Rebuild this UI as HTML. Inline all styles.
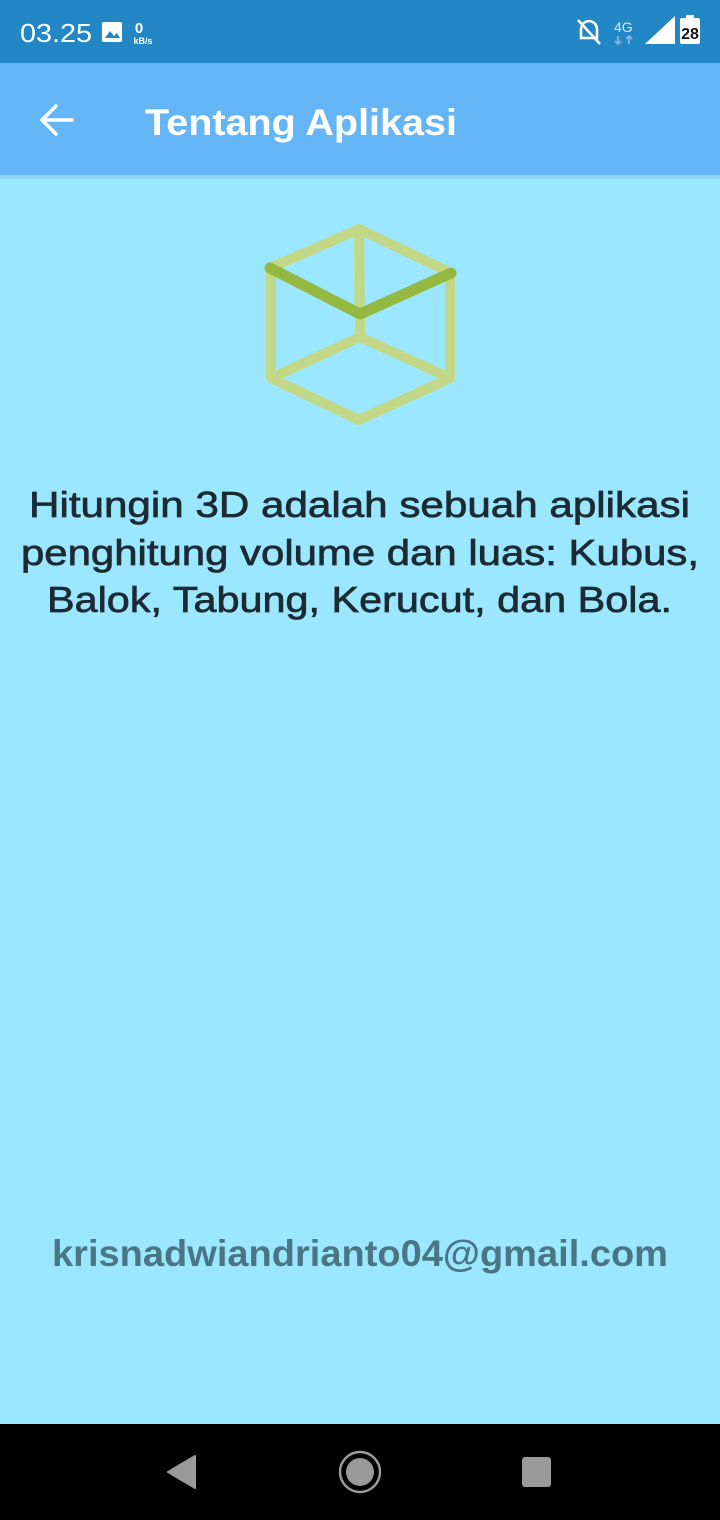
<!DOCTYPE html>
<html><head><meta charset="utf-8"><style>
html,body{margin:0;padding:0;width:720px;height:1520px;overflow:hidden;background:#9be7ff;font-family:"Liberation Sans",sans-serif}
</style></head><body>
<svg width="720" height="1520" xmlns="http://www.w3.org/2000/svg" style="position:absolute;left:0;top:0">
<rect x="0" y="0" width="720" height="1520" fill="#9be7ff"/>
<rect x="0" y="0" width="720" height="63" fill="#2387c5"/>
<rect x="0" y="63" width="720" height="112" fill="#64b5f6"/>
<rect x="0" y="175" width="720" height="4" fill="#8fd3f8"/>
<text x="20" y="42" font-size="26" fill="#fff" textLength="72" lengthAdjust="spacingAndGlyphs">03.25</text>
<rect x="102" y="22" width="20" height="20" rx="2" fill="#fff"/>
<path d="M105 38 L110 31 L114 36 L117 33 L120 38 Z" fill="#2387c5"/>
<text x="139" y="33" font-size="15" font-weight="bold" fill="#fff" text-anchor="middle">0</text>
<text x="143" y="44" font-size="9" font-weight="bold" fill="#fff" text-anchor="middle">kB/s</text>
<g stroke="#fff" stroke-width="2.5" fill="none">
<path d="M581 38 L581 30 Q581 22 589 21 Q597 22 597 30 L597 38 Z"/>
<path d="M578 20 L600 44"/>
</g>
<text x="614" y="32" font-size="14" fill="#dbe9f5">4G</text>
<path d="M618 36 v8 M615 41 l3 3 l3 -3 M629 44 v-8 M626 39 l3 -3 l3 3" stroke="#7fb3df" stroke-width="2" fill="none"/>
<path d="M645 44 L675 44 L675 16 Z" fill="#fff"/>
<rect x="680" y="18" width="20" height="26" rx="2" fill="#fff"/>
<rect x="686" y="15" width="8" height="4" fill="#fff"/>
<text x="690" y="39" font-size="16" font-weight="bold" fill="#111" text-anchor="middle">28</text>
<path d="M43 120 H72 M56 106 L42 120 L56 134" stroke="#fff" stroke-width="3.5" fill="none" stroke-linecap="round" stroke-linejoin="round"/>
<text x="145" y="135" font-size="37" font-weight="bold" fill="#fff" textLength="312" lengthAdjust="spacingAndGlyphs">Tentang Aplikasi</text>
<g stroke="#c3d886" stroke-width="10" fill="none" stroke-linejoin="round" stroke-linecap="round">
<path d="M270 268 L359 229 L451 273"/>
<path d="M359 229 L360 337"/>
<path d="M271 268 L271 378 L359 420 L450 378 L450 273"/>
<path d="M271 378 L360 337 L450 378"/>
</g>
<path d="M270 268 L360 314 L451 273" stroke="#94b840" stroke-width="11" fill="none" stroke-linecap="round" stroke-linejoin="round"/>
<g font-size="36" fill="#1c2a33" stroke="#1c2a33" stroke-width="0.7">
<text x="29" y="517" textLength="661" lengthAdjust="spacingAndGlyphs">Hitungin 3D adalah sebuah aplikasi</text>
<text x="21" y="565" textLength="678" lengthAdjust="spacingAndGlyphs">penghitung volume dan luas: Kubus,</text>
<text x="47" y="612" textLength="625" lengthAdjust="spacingAndGlyphs">Balok, Tabung, Kerucut, dan Bola.</text>
</g>
<text x="52" y="1266" font-size="37" font-weight="bold" fill="#4a7585" textLength="616" lengthAdjust="spacingAndGlyphs">krisnadwiandrianto04@gmail.com</text>
<rect x="0" y="1424" width="720" height="96" fill="#000"/>
<path d="M195 1456 L195 1488 L168 1472 Z" fill="#9a9a9a" stroke="#9a9a9a" stroke-width="2" stroke-linejoin="round"/>
<circle cx="360" cy="1472" r="20" fill="none" stroke="#9a9a9a" stroke-width="2.5"/>
<circle cx="360" cy="1472" r="14" fill="#9a9a9a"/>
<rect x="522" y="1457" width="29" height="30" rx="3" fill="#9a9a9a"/>
</svg>
</body></html>
